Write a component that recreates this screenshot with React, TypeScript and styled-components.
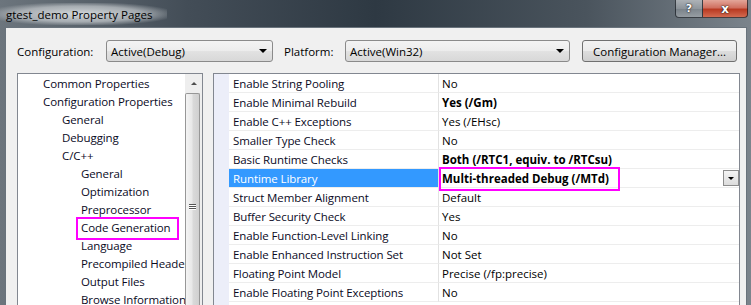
import React from "react";
import styled, { createGlobalStyle } from "styled-components";

const GlobalStyle = createGlobalStyle`
  html, body {
    margin: 0;
    padding: 0;
    overflow: hidden;
    background: #2d363e;
  }
`;

const Window = styled.div`
  width: 751px;
  height: 305px;
  display: flex;
  flex-direction: column;
  overflow: hidden;
  background: linear-gradient(90deg, #6c757d 0%, #434d57 25%, #2e3943 50%, #4a545d 78%, #7b848c 100%);
  font-family: "Open Sans", "Noto Sans", sans-serif;
  font-size: 11px;
  color: #000;
`;

const TitleBar = styled.div`
  height: 27px;
  flex: none;
  display: flex;
  align-items: flex-start;
`;

const Title = styled.div`
  margin-top: 3px;
  padding: 0 14px 0 6px;
  height: 22px;
  line-height: 23px;
  font-size: 11.5px;
  background: radial-gradient(ellipse 58% 55% at 48% 50%, rgba(214, 218, 221, 0.97) 0%, rgba(190, 195, 199, 0.75) 65%, rgba(160, 166, 171, 0) 100%);
`;

const Caption = styled.div`
  margin-left: auto;
  margin-right: 3px;
  display: flex;
  height: 18px;
`;

const CaptionButton = styled.div<{ $close?: boolean }>`
  width: ${(p) => (p.$close ? 45 : 28)}px;
  box-sizing: border-box;
  border: 1px solid rgba(20, 26, 32, 0.75);
  border-top: none;
  border-left: ${(p) => (p.$close ? "none" : "1px solid rgba(20, 26, 32, 0.75)")};
  border-radius: ${(p) => (p.$close ? "0 0 4px 0" : "0 0 0 4px")};
  background: ${(p) =>
    p.$close
      ? "linear-gradient(#e3a699 0%, #d07060 45%, #b93a22 55%, #d36a50 100%)"
      : "linear-gradient(rgba(255,255,255,0.45) 0%, rgba(255,255,255,0.25) 50%, rgba(255,255,255,0.12) 51%, rgba(255,255,255,0.3) 100%)"};
  display: flex;
  align-items: center;
  justify-content: center;
  color: #fff;
  font-family: "DejaVu Sans", sans-serif;
  font-weight: bold;
  font-size: ${(p) => (p.$close ? 12 : 11)}px;
  text-shadow: 0 0 2px #222, 0 0 1px #000;
`;

const Client = styled.div`
  flex: 1;
  min-height: 0;
  margin: 0 4px 0 5px;
  background: #f0f0f0;
  border: 1px solid #69737c;
  border-bottom: none;
  display: flex;
  flex-direction: column;
`;

const Toolbar = styled.div`
  display: flex;
  align-items: center;
  padding: 12px 0 0 11px;
  height: 22px;
`;

const Label = styled.div<{ $w: number; $ml?: number }>`
  width: ${(p) => p.$w}px;
  margin-left: ${(p) => p.$ml ?? 0}px;
  font-size: 11.5px;
`;

const Combo = styled.div<{ $w: number }>`
  width: ${(p) => p.$w}px;
  height: 22px;
  box-sizing: border-box;
  border: 1px solid #8a8a8a;
  border-radius: 3px;
  background: linear-gradient(#f3f3f3 0%, #ececec 50%, #e2e2e2 51%, #d8d8d8 100%);
  display: flex;
  align-items: center;
  padding-left: 4px;
  font-size: 11.5px;
`;

const ComboText = styled.span`
  flex: 1;
`;

const Arrow = styled.span`
  width: 0;
  height: 0;
  margin-right: 5px;
  border-left: 4px solid transparent;
  border-right: 4px solid transparent;
  border-top: 4px solid #000;
`;

const Button = styled.div`
  margin-left: 12px;
  width: 155px;
  height: 22px;
  box-sizing: border-box;
  border: 1px solid #707070;
  border-radius: 3px;
  background: linear-gradient(#f2f2f2 0%, #ebebeb 50%, #dddddd 51%, #cfcfcf 100%);
  display: flex;
  align-items: center;
  justify-content: center;
  font-size: 11.5px;
`;

const Panels = styled.div`
  flex: 1;
  min-height: 0;
  display: flex;
  gap: 10px;
  margin-top: 11px;
  padding-left: 11px;
  padding-right: 6px;
`;

const Tree = styled.div`
  width: 186px;
  box-sizing: border-box;
  border: 1px solid #828790;
  border-bottom: none;
  background: #fff;
  display: flex;
  overflow: hidden;
`;

const TreeList = styled.div`
  flex: 1;
  min-width: 0;
  overflow: hidden;
`;

const TreeItem = styled.div<{ $level: number }>`
  position: relative;
  height: 18px;
  line-height: 19px;
  padding-left: ${(p) => 25 + p.$level * 19}px;
  white-space: nowrap;
  font-size: 11.5px;
  letter-spacing: -0.1px;
  color: #0a0a1e;
`;

const TreeMark = styled.span`
  position: absolute;
  left: 58px;
  top: -1px;
  width: 103px;
  height: 23px;
  box-sizing: border-box;
  border: 2px solid #f0f;
`;

const ScrollTrack = styled.div`
  width: 17px;
  flex: none;
  display: flex;
  flex-direction: column;
  background: #eeeeee;
`;

const ScrollUp = styled.div`
  height: 18px;
  display: flex;
  align-items: center;
  justify-content: center;
  &::after {
    content: "";
    border-left: 3px solid transparent;
    border-right: 3px solid transparent;
    border-bottom: 3px solid #4d4d4d;
  }
`;

const Thumb = styled.div`
  flex: 1;
  margin: 1px 2px 0 0;
  box-sizing: border-box;
  border: 1px solid #979797;
  border-bottom: none;
  border-radius: 2px 2px 0 0;
  background: linear-gradient(90deg, #f4f4f4 0%, #e8e8e8 45%, #d9d9d9 55%, #d0d0d0 100%);
  padding-top: 110px;
  display: flex;
  flex-direction: column;
  align-items: center;
  gap: 1px;
`;

const GripLine = styled.span`
  width: 7px;
  height: 1px;
  background: #555;
  box-shadow: 0 1px 0 #fff;
`;

const Grid = styled.div`
  flex: 1;
  box-sizing: border-box;
  border: 1px solid #828790;
  border-bottom: none;
  background: #fff;
  display: flex;
  overflow: hidden;
`;

const Gutter = styled.div`
  width: 15px;
  flex: none;
  background: #eceef9;
`;

const Rows = styled.div`
  flex: 1;
`;

const Row = styled.div`
  display: flex;
  height: 19px;
`;

const NameCell = styled.div<{ $selected?: boolean }>`
  width: 210px;
  box-sizing: border-box;
  padding-left: 4px;
  line-height: 19px;
  height: 19px;
  white-space: nowrap;
  border-bottom: 1px solid #ededed;
  border-right: 1px solid #e2e2e2;
  background: ${(p) => (p.$selected ? "#3399ff" : "#fff")};
  color: ${(p) => (p.$selected ? "#fff" : "#0a0a1e")};
  font-size: 11.5px;
  letter-spacing: -0.1px;
`;

const ValueCell = styled.div<{ $bold?: boolean }>`
  position: relative;
  flex: 1;
  box-sizing: border-box;
  padding-left: 3px;
  line-height: 19px;
  height: 19px;
  white-space: nowrap;
  border-bottom: 1px solid #ededed;
  font-weight: ${(p) => (p.$bold ? 700 : 400)};
  font-size: 11.5px;
`;

const ValueMark = styled.span`
  position: absolute;
  left: 0;
  top: -2px;
  width: 181px;
  height: 24px;
  box-sizing: border-box;
  border: 2px solid #f0f;
`;

const DropButton = styled.span`
  position: absolute;
  right: 0;
  top: 1px;
  width: 16px;
  height: 16px;
  box-sizing: border-box;
  border: 1px solid #8d8d8d;
  background: linear-gradient(#f4f4f4, #dcdcdc);
  display: flex;
  align-items: center;
  justify-content: center;
  &::after {
    content: "";
    border-left: 3px solid transparent;
    border-right: 3px solid transparent;
    border-top: 3px solid #000;
  }
`;

const treeItems: { label: string; level: number; marked?: boolean }[] = [
  { label: "Common Properties", level: 0 },
  { label: "Configuration Properties", level: 0 },
  { label: "General", level: 1 },
  { label: "Debugging", level: 1 },
  { label: "C/C++", level: 1 },
  { label: "General", level: 2 },
  { label: "Optimization", level: 2 },
  { label: "Preprocessor", level: 2 },
  { label: "Code Generation", level: 2, marked: true },
  { label: "Language", level: 2 },
  { label: "Precompiled Headers", level: 2 },
  { label: "Output Files", level: 2 },
  { label: "Browse Information", level: 2 },
];

const properties: { name: string; value: string; bold?: boolean; selected?: boolean }[] = [
  { name: "Enable String Pooling", value: "No" },
  { name: "Enable Minimal Rebuild", value: "Yes (/Gm)", bold: true },
  { name: "Enable C++ Exceptions", value: "Yes (/EHsc)" },
  { name: "Smaller Type Check", value: "No" },
  { name: "Basic Runtime Checks", value: "Both (/RTC1, equiv. to /RTCsu)", bold: true },
  { name: "Runtime Library", value: "Multi-threaded Debug (/MTd)", bold: true, selected: true },
  { name: "Struct Member Alignment", value: "Default" },
  { name: "Buffer Security Check", value: "Yes" },
  { name: "Enable Function-Level Linking", value: "No" },
  { name: "Enable Enhanced Instruction Set", value: "Not Set" },
  { name: "Floating Point Model", value: "Precise (/fp:precise)" },
  { name: "Enable Floating Point Exceptions", value: "No" },
];

export default function App() {
  return (
    <Window>
      <GlobalStyle />
      <TitleBar>
        <Title>gtest_demo Property Pages</Title>
        <Caption>
          <CaptionButton>?</CaptionButton>
          <CaptionButton $close>x</CaptionButton>
        </Caption>
      </TitleBar>
      <Client>
        <Toolbar>
          <Label $w={89}>Configuration:</Label>
          <Combo $w={167}>
            <ComboText>Active(Debug)</ComboText>
            <Arrow />
          </Combo>
          <Label $w={61} $ml={11}>Platform:</Label>
          <Combo $w={225}>
            <ComboText>Active(Win32)</ComboText>
            <Arrow />
          </Combo>
          <Button>Configuration Manager...</Button>
        </Toolbar>
        <Panels>
          <Tree>
            <TreeList>
              {treeItems.map((item, i) => (
                <TreeItem key={i} $level={item.level}>
                  {item.marked && <TreeMark />}
                  {item.label}
                </TreeItem>
              ))}
            </TreeList>
            <ScrollTrack>
              <ScrollUp />
              <Thumb>
                <GripLine />
                <GripLine />
                <GripLine />
              </Thumb>
            </ScrollTrack>
          </Tree>
          <Grid>
            <Gutter />
            <Rows>
              {properties.map((p) => (
                <Row key={p.name}>
                  <NameCell $selected={p.selected}>{p.name}</NameCell>
                  <ValueCell $bold={p.bold}>
                    {p.selected && <ValueMark />}
                    {p.value}
                    {p.selected && <DropButton />}
                  </ValueCell>
                </Row>
              ))}
            </Rows>
          </Grid>
        </Panels>
      </Client>
    </Window>
  );
}
